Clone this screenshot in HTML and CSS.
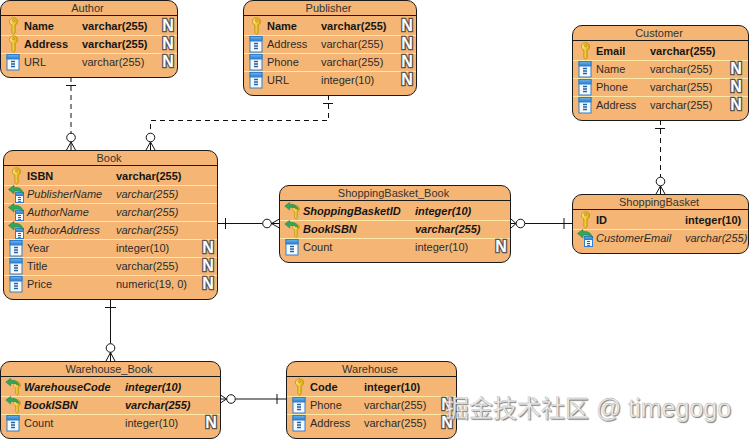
FILE: index.html
```html
<!DOCTYPE html>
<html lang="en">
<head>
<meta charset="utf-8">
<title>ERD</title>
<link rel="stylesheet" href="styles.css">
</head>
<body>
<svg class="defs" width="0" height="0" aria-hidden="true">
  <defs>
    <linearGradient id="keyg" x1="0" x2="1" y1="0" y2="0"><stop offset="0" stop-color="#ffe97e"/><stop offset="1" stop-color="#e0aa00"/></linearGradient>
    <linearGradient id="colg" x1="0" x2="0" y1="0" y2="1"><stop offset="0" stop-color="#6ab4f0"/><stop offset="1" stop-color="#2a7ccc"/></linearGradient>
    <symbol id="key" viewBox="0 0 12 18">
      <path d="M6 .8c2.400 0 4 1.700 4 3.800 0 1.700-1 2.900-2.400 3.400v7.800L6 17.300l-1.600-2V8C3 7.500 2 6.300 2 4.600 2 2.500 3.600.8 6 .8z" fill="url(#keyg)" stroke="#b58a00" stroke-width=".8"/>
      <circle cx="6" cy="3.600" r="1.100" fill="#f5b675" stroke="#a57c00" stroke-width=".6"/>
    </symbol>
    <symbol id="col" viewBox="0 0 14 18">
      <rect x=".5" y="1.500" width="12" height="15.500" fill="#f6faff" stroke="#2f7fcc"/>
      <rect x=".5" y="1.500" width="12" height="4.500" fill="url(#colg)" stroke="#2f7fcc"/>
      <path d="M4.500 8.500h4M4.500 11h4M4.500 13.500h4" stroke="#24649f" stroke-width="1.300"/>
    </symbol>
    <symbol id="arrow" viewBox="0 0 16 10">
      <path d="M.5 4.500 6 .3v2.400c4.500-.6 8 .7 9.500 6-2.600-2.500-5.600-3-9.500-2.500v2.800z" fill="#33a55c" stroke="#1d7a3c" stroke-width=".5"/>
    </symbol>
    <symbol id="fk" viewBox="0 0 17 18">
      <rect x="7.500" y="7.500" width="8" height="10" fill="#f6faff" stroke="#2f7fcc"/>
      <rect x="7.500" y="7.500" width="8" height="3" fill="url(#colg)" stroke="#2f7fcc"/>
      <path d="M10 12.500h3M10 14.500h3M10 16.300h3" stroke="#24649f"/>
      <use href="#arrow" x="0" y="0" width="16" height="10"/>
    </symbol>
    <symbol id="pfk" viewBox="0 0 17 18">
      <use href="#key" x="7" y="3" width="10" height="15"/>
      <use href="#arrow" x="0" y="0" width="15" height="9"/>
    </symbol>
  </defs>
</svg>

<main class="canvas">
  <section class="entity author">
    <h2 class="title">Author</h2>
    <div class="row pk"><svg class="icon"><use href="#key"/></svg><span>Name</span><span>varchar(255)</span><b class="null">N</b></div>
    <div class="row pk"><svg class="icon"><use href="#key"/></svg><span>Address</span><span>varchar(255)</span><b class="null">N</b></div>
    <div class="row"><svg class="icon"><use href="#col"/></svg><span>URL</span><span>varchar(255)</span><b class="null">N</b></div>
  </section>

  <section class="entity publisher">
    <h2 class="title">Publisher</h2>
    <div class="row pk"><svg class="icon"><use href="#key"/></svg><span>Name</span><span>varchar(255)</span><b class="null">N</b></div>
    <div class="row"><svg class="icon"><use href="#col"/></svg><span>Address</span><span>varchar(255)</span><b class="null">N</b></div>
    <div class="row"><svg class="icon"><use href="#col"/></svg><span>Phone</span><span>varchar(255)</span><b class="null">N</b></div>
    <div class="row"><svg class="icon"><use href="#col"/></svg><span>URL</span><span>integer(10)</span><b class="null">N</b></div>
  </section>

  <section class="entity customer">
    <h2 class="title">Customer</h2>
    <div class="row pk"><svg class="icon"><use href="#key"/></svg><span>Email</span><span>varchar(255)</span></div>
    <div class="row"><svg class="icon"><use href="#col"/></svg><span>Name</span><span>varchar(255)</span><b class="null">N</b></div>
    <div class="row"><svg class="icon"><use href="#col"/></svg><span>Phone</span><span>varchar(255)</span><b class="null">N</b></div>
    <div class="row"><svg class="icon"><use href="#col"/></svg><span>Address</span><span>varchar(255)</span><b class="null">N</b></div>
  </section>

  <section class="entity book">
    <h2 class="title">Book</h2>
    <div class="row pk"><svg class="icon"><use href="#key"/></svg><span>ISBN</span><span>varchar(255)</span></div>
    <div class="row fkrow"><svg class="icon"><use href="#fk"/></svg><span>PublisherName</span><span>varchar(255)</span></div>
    <div class="row fkrow"><svg class="icon"><use href="#fk"/></svg><span>AuthorName</span><span>varchar(255)</span></div>
    <div class="row fkrow"><svg class="icon"><use href="#fk"/></svg><span>AuthorAddress</span><span>varchar(255)</span></div>
    <div class="row"><svg class="icon"><use href="#col"/></svg><span>Year</span><span>integer(10)</span><b class="null">N</b></div>
    <div class="row"><svg class="icon"><use href="#col"/></svg><span>Title</span><span>varchar(255)</span><b class="null">N</b></div>
    <div class="row"><svg class="icon"><use href="#col"/></svg><span>Price</span><span>numeric(19, 0)</span><b class="null">N</b></div>
  </section>

  <section class="entity basket-book">
    <h2 class="title">ShoppingBasket_Book</h2>
    <div class="row pk fkrow"><svg class="icon"><use href="#pfk"/></svg><span>ShoppingBasketID</span><span>integer(10)</span></div>
    <div class="row pk fkrow"><svg class="icon"><use href="#pfk"/></svg><span>BookISBN</span><span>varchar(255)</span></div>
    <div class="row"><svg class="icon"><use href="#col"/></svg><span>Count</span><span>integer(10)</span><b class="null">N</b></div>
  </section>

  <section class="entity basket">
    <h2 class="title">ShoppingBasket</h2>
    <div class="row pk"><svg class="icon"><use href="#key"/></svg><span>ID</span><span>integer(10)</span></div>
    <div class="row fkrow"><svg class="icon"><use href="#fk"/></svg><span>CustomerEmail</span><span>varchar(255)</span></div>
  </section>

  <section class="entity warehouse-book">
    <h2 class="title">Warehouse_Book</h2>
    <div class="row pk fkrow"><svg class="icon"><use href="#pfk"/></svg><span>WarehouseCode</span><span>integer(10)</span></div>
    <div class="row pk fkrow"><svg class="icon"><use href="#pfk"/></svg><span>BookISBN</span><span>varchar(255)</span></div>
    <div class="row"><svg class="icon"><use href="#col"/></svg><span>Count</span><span>integer(10)</span><b class="null">N</b></div>
  </section>

  <section class="entity warehouse">
    <h2 class="title">Warehouse</h2>
    <div class="row pk"><svg class="icon"><use href="#key"/></svg><span>Code</span><span>integer(10)</span></div>
    <div class="row"><svg class="icon"><use href="#col"/></svg><span>Phone</span><span>varchar(255)</span><b class="null">N</b></div>
    <div class="row"><svg class="icon"><use href="#col"/></svg><span>Address</span><span>varchar(255)</span><b class="null">N</b></div>
  </section>

  <svg class="links" width="749" height="439" viewBox="0 0 749 439" aria-hidden="true">
    <g class="dash">
      <path d="M71 77V133"/>
      <path d="M328.500 95V120.500H150.500V133"/>
      <path d="M660.500 120V177"/>
    </g>
    <g class="solid">
      <path d="M66 85.500H76"/>
      <path d="M323 103.500H333"/>
      <path d="M655 128.500H665"/>
      <circle cx="71" cy="137.500" r="4.300"/>
      <path d="M71 142 66.500 150M71 142V150M71 142 75.500 150"/>
      <circle cx="150.500" cy="137.500" r="4.300"/>
      <path d="M150.500 142 146 150M150.500 142V150M150.500 142 155 150"/>
      <circle cx="660.500" cy="181.500" r="4.300"/>
      <path d="M660.500 186 656 194M660.500 186V194M660.500 186 665 194"/>

      <path d="M218 223.500H262.500M225.500 218V229"/>
      <circle cx="267" cy="223.500" r="4.300"/>
      <path d="M271.500 223.500 279.500 219M271.500 223.500H279.500M271.500 223.500 279.500 228"/>

      <path d="M525 223.500H572.500M564 218V229"/>
      <circle cx="520.500" cy="223.500" r="4.300"/>
      <path d="M516 223.500 511 219M516 223.500H511M516 223.500 511 228"/>

      <path d="M110.500 300V343.500M105 307.500H116"/>
      <circle cx="110.500" cy="348" r="4.300"/>
      <path d="M110.500 352.500 106 361M110.500 352.500V361M110.500 352.500 115 361"/>

      <path d="M235.500 399H287M277 394V404"/>
      <circle cx="231" cy="399" r="4.300"/>
      <path d="M226.500 399 220.500 395M226.500 399H220.500M226.500 399 220.500 403"/>
    </g>
  </svg>

  <p class="watermark">掘金技术社区<span class="handle"> @ timegogo</span></p>
</main>
</body>
</html>
```
FILE: styles.css
```css
html, body { margin: 0; padding: 0; background: #fff; }
body { width: 749px; height: 439px; overflow: hidden; }
.defs { position: absolute; }
.canvas {
  position: relative;
  width: 749px;
  height: 439px;
  overflow: hidden;
  font: 11px/18px "Liberation Sans", Arial, sans-serif;
  color: #2b2b2b;
}
.entity {
  position: absolute;
  box-sizing: border-box;
  border: 1px solid #1a1a1a;
  border-radius: 10px;
  background: #f5b675;
  overflow: hidden;
  --name: 58px;
  --icon: 23px;
  --pad: 1px;
}
.title {
  box-sizing: border-box;
  height: 15px;
  margin: 0 0 1px;
  padding-right: 3px;
  border-bottom: 1px solid #1a1a1a;
  font: 400 11px/14px "Liberation Sans", Arial, sans-serif;
  text-align: center;
  color: #333;
}
.row {
  box-sizing: border-box;
  height: 18px;
  padding-right: var(--pad);
  display: grid;
  grid-template-columns: var(--icon) var(--name) 1fr 16px;
  align-items: center;
  white-space: nowrap;
}
.row + .row { box-shadow: inset 0 1px #ffe9a6; }
.pk { font-weight: 700; color: #151515; }
.fkrow { font-style: italic; }
.icon { width: 17px; height: 18px; margin-left: 4px; justify-self: start; }
.null {
  grid-column: 4;
  font: 700 16px/16px "Liberation Sans", Arial, sans-serif;
  color: #fff;
  -webkit-text-stroke: 2.6px #555;
  paint-order: stroke fill;
  text-align: center;
}

.author { left: 0; top: 0; width: 178px; height: 78px; --name: 58px; }
.publisher { left: 243px; top: 0; width: 174px; height: 96px; --name: 54px; }
.customer { left: 572px; top: 25px; width: 177px; height: 96px; --name: 54px; --pad: 4px; }
.book { left: 3px; top: 150px; width: 215px; height: 150px; --name: 89px; }
.basket-book { left: 279px; top: 185px; width: 232px; height: 78px; --name: 112px; }
.basket { left: 572px; top: 194px; width: 177px; height: 60px; --name: 89px; }
.warehouse-book { left: 0; top: 361px; width: 221px; height: 78px; --name: 101px; }
.warehouse { left: 286px; top: 361px; width: 171px; height: 78px; --name: 54px; }

.links { position: absolute; left: 0; top: 0; pointer-events: none; }
.links path, .links circle { fill: none; stroke: #111; stroke-width: 1; }
.links circle { fill: #fff; }
.dash path { stroke-dasharray: 5 4; }

.watermark {
  position: absolute;
  left: 445px;
  top: 392px;
  margin: 0;
  font: 400 24px/30px "Noto Sans CJK SC", "Noto Sans", sans-serif;
  white-space: pre;
  color: #ececec;
  -webkit-text-stroke: .3px #aaa;
  text-shadow: 1px 1px 1px #7a7a7a;
}
.handle {
  font: 400 25px/30px "Liberation Sans", Arial, sans-serif;
}
```
